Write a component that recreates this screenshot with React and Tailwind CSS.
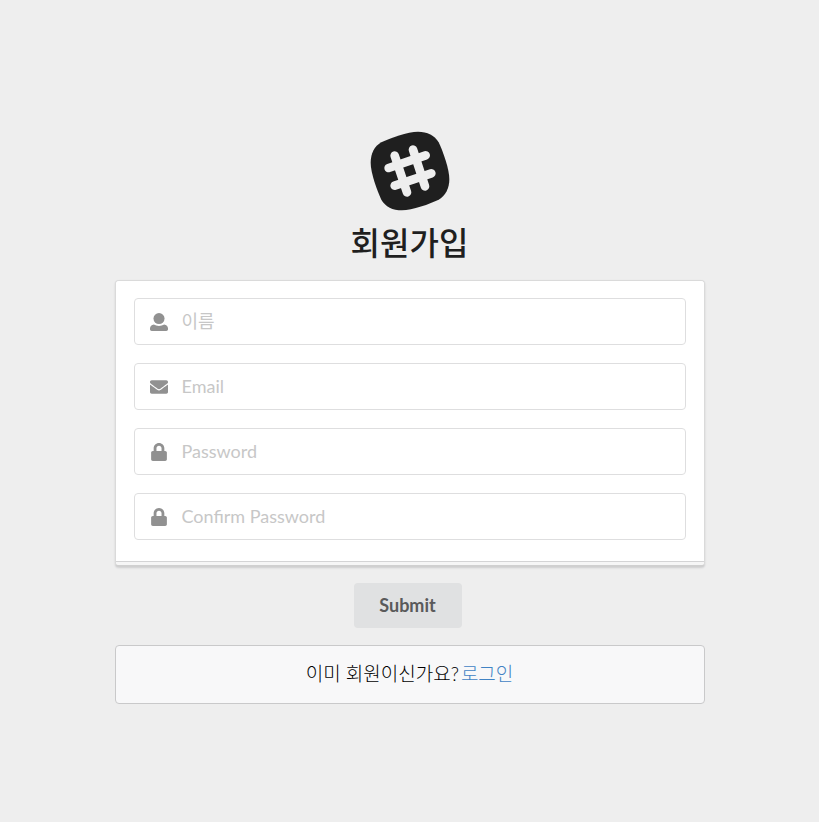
import React from "react";
import { FaEnvelope, FaLock } from "react-icons/fa";

function UserIcon({ className }) {
  return (
    <svg viewBox="0 0 512 512" className={className} fill="currentColor" aria-hidden="true">
      <circle cx="256" cy="158" r="158" />
      <path d="M110 326c40 26 90 42 146 42s106-16 146-42c64 6 110 52 110 112v26c0 26-22 48-48 48H48c-26 0-48-22-48-48v-26c0-60 46-106 110-112z" />
    </svg>
  );
}

function HashLogo() {
  return (
    <svg viewBox="91 34 240 240" className="size-20" aria-hidden="true">
      <path
        fill="#1f1f1f"
        d="M235 36C263 36 285 47 297 68C309 93 329 148 329 178C329 206 318 228 297 240C272 252 217 272 187 272C159 272 137 261 125 240C113 215 93 160 93 130C93 102 104 80 125 68C150 56 205 36 235 36Z"
      />
      <g stroke="#eeeeee" strokeWidth="26" strokeLinecap="round">
        <path d="M147 145L258 107" />
        <path d="M165 198L275 161" />
        <path d="M165 108L202 218" />
        <path d="M220 90L256 200" />
      </g>
    </svg>
  );
}

const fields = [
  { name: "username", type: "text", placeholder: "이름", Icon: UserIcon },
  { name: "email", type: "email", placeholder: "Email", Icon: FaEnvelope },
  { name: "password", type: "password", placeholder: "Password", Icon: FaLock },
  { name: "passwordConfirmation", type: "password", placeholder: "Confirm Password", Icon: FaLock },
];

export default function App() {
  return (
    <main className="flex min-h-screen flex-col items-center justify-center bg-[#eeeeee] px-4 pt-[13px] font-[Lato,'Noto_Sans_CJK_KR',sans-serif] text-lg text-[#1f1f1f]">
      <div className="flex w-full max-w-[590px] flex-col">
        <h1 className="flex flex-col items-center text-[32px] leading-10 font-medium">
          <HashLogo />
          <span className="mt-[10px] font-['Noto_Sans_CJK_KR',sans-serif]">회원가입</span>
        </h1>
        <form className="mt-[19px] flex flex-col items-center" onSubmit={(e) => e.preventDefault()}>
          <div className="w-full overflow-hidden rounded border border-[#dadada] border-b-2 border-b-[#d0d0d0] bg-[#f6f6f6] shadow-[0_1px_2px_rgba(34,36,38,0.15)]">
            <div className="flex flex-col gap-[18px] border-b border-[#d4d4d5] bg-white px-[18px] pt-[17px] pb-[21px]">
              {fields.map(({ name, type, placeholder, Icon }) => (
                <label
                  key={name}
                  className="flex h-[47px] items-center rounded border border-[#dededf] bg-white pl-[15px] focus-within:border-[#85b7d9]"
                >
                  <Icon className="size-[18px] shrink-0 text-[#919191]" />
                  <input
                    type={type}
                    name={name}
                    placeholder={placeholder}
                    aria-label={placeholder}
                    className="h-full min-w-0 flex-1 bg-transparent px-[14px] pb-[2px] text-lg outline-none placeholder:text-[#c7c7c7]"
                  />
                </label>
              ))}
            </div>
            <div className="h-[3px]" />
          </div>
          <button
            type="submit"
            className="mt-4 mr-1 h-[45px] w-[108px] rounded bg-[#e0e1e2] pb-[2px] text-lg font-bold text-[#5a5a5b]"
          >
            Submit
          </button>
        </form>
        <p className="mt-[17px] flex h-[59px] items-center justify-center gap-[2px] rounded border border-[#c9c9ca] bg-[#f8f8f9] pb-[2px] text-[19px] font-light text-black">
          <span>이미 회원이신가요?</span>
          <a href="#login" className="text-[#4183c4]">
            로그인
          </a>
        </p>
      </div>
    </main>
  );
}
